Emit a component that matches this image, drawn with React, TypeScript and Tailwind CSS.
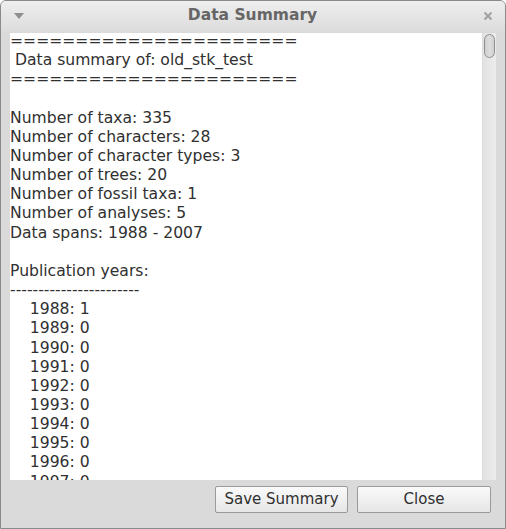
import React from "react";

const lines = [
  "======================",
  " Data summary of: old_stk_test",
  "======================",
  "",
  "Number of taxa: 335",
  "Number of characters: 28",
  "Number of character types: 3",
  "Number of trees: 20",
  "Number of fossil taxa: 1",
  "Number of analyses: 5",
  "Data spans: 1988 - 2007",
  "",
  "Publication years:",
  "-----------------------",
  "    1988: 1",
  "    1989: 0",
  "    1990: 0",
  "    1991: 0",
  "    1992: 0",
  "    1993: 0",
  "    1994: 0",
  "    1995: 0",
  "    1996: 0",
  "    1997: 0",
];

export default function App() {
  return (
    <div className="w-[506px] h-[529px] bg-[#dadada] border border-[#8a8a8a] rounded-t-[6px] flex flex-col overflow-hidden">
      {/* Title bar */}
      <div className="h-[31px] shrink-0 flex items-center justify-between px-[14px] pb-[2px] bg-gradient-to-b from-[#eeeeee] to-[#dcdcdc]">
        <svg width="10" height="6" viewBox="0 0 10 6" className="ml-[-1px]">
          <path d="M0 0 L10 0 L5 6 Z" fill="#8e8e8e" />
        </svg>
        <span className="font-['DejaVu_Sans'] font-bold text-[15.5px] text-[#666666] ml-[-2px]">
          Data Summary
        </span>
        <svg width="10" height="10" viewBox="0 0 10 10" className="mr-[-2px]">
          <path d="M1.5 1.5 L8.5 8.5 M8.5 1.5 L1.5 8.5" stroke="#a0a0a0" strokeWidth="2" />
        </svg>
      </div>

      {/* Text area + scrollbar */}
      <div className="flex ml-[9px] mr-[9px] mt-[1px] h-[447px]">
        <div className="flex-1 bg-white overflow-hidden">
          <pre className="font-['DejaVu_Sans'] text-[15.6px] leading-[19.15px] text-[#303030] whitespace-pre -mt-[1px]">
            {lines.join("\n")}
          </pre>
        </div>
        <div className="w-[14px] bg-gradient-to-r from-[#e2e2e2] to-[#ececec] border-l border-[#dcdcdc] flex justify-center pt-[1px]">
          <div className="w-[11px] h-[24px] rounded-full border border-[#8f8f8f] bg-gradient-to-r from-[#cfcfcf] via-[#dedede] to-[#cfcfcf]" />
        </div>
      </div>

      {/* Buttons */}
      <div className="flex justify-end gap-[9px] pr-[14px] pt-[6px]">
        <button className="w-[133px] h-[27px] px-0 rounded-[2px] border border-[#9a9a9a] bg-gradient-to-b from-[#fafafa] to-[#e6e6e6] font-['DejaVu_Sans'] text-[15px] text-[#303030]">
          Save Summary
        </button>
        <button className="w-[134px] h-[27px] px-0 rounded-[2px] border border-[#9a9a9a] bg-gradient-to-b from-[#fafafa] to-[#e6e6e6] font-['DejaVu_Sans'] text-[15px] text-[#303030]">
          Close
        </button>
      </div>
    </div>
  );
}
